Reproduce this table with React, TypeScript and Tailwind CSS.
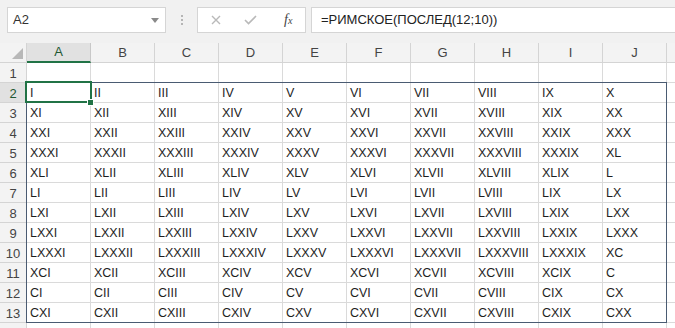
import React from 'react'

// Column letters shown in the header row
const columns = ['A', 'B', 'C', 'D', 'E', 'F', 'G', 'H', 'I', 'J']

// Row numbers visible in the sheet
const rows = Array.from({ length: 13 }, (_, i) => i + 1)

// Convert an integer to a roman numeral
const toRoman = (n: number): string => {
  const table: [number, string][] = [
    [100, 'C'], [90, 'XC'], [50, 'L'], [40, 'XL'],
    [10, 'X'], [9, 'IX'], [5, 'V'], [4, 'IV'], [1, 'I']
  ]
  let out = ''
  let rest = n
  for (const [value, sym] of table) {
    while (rest >= value) {
      out += sym
      rest -= value
    }
  }
  return out
}

// Spilled result of =РИМСКОЕ(ПОСЛЕД(12;10)) starting at A2
const cellValue = (row: number, col: number) => {
  if (row < 2) return ''
  return toRoman((row - 2) * 10 + col + 1)
}

const font = { fontFamily: '"Liberation Sans", Arial, sans-serif' }

const FormulaBar = () => (
  <div className="h-[43px] bg-[#f1f1f1] flex items-start pt-[7px] pl-[7px]">
    {/* Name box */}
    <div className="w-[159px] h-[26px] bg-white border border-[#d5d5d5] flex items-center justify-between pl-[5px] pr-[6px]">
      <span className="text-[13px] text-[#333]">A2</span>
      <svg width="8" height="5" viewBox="0 0 8 5">
        <path d="M0 0 L8 0 L4 5 Z" fill="#8a8a8a" />
      </svg>
    </div>

    {/* Grip dots */}
    <div className="w-[31px] h-[26px] flex flex-col items-center justify-center gap-[2px]">
      <span className="w-[2px] h-[2px] bg-[#b5b5b5]" />
      <span className="w-[2px] h-[2px] bg-[#b5b5b5]" />
      <span className="w-[2px] h-[2px] bg-[#b5b5b5]" />
    </div>

    {/* Cancel / enter / insert function */}
    <div className="w-[109px] h-[26px] bg-white border border-[#d5d5d5] flex items-center">
      <svg className="ml-[13px]" width="10" height="10" viewBox="0 0 10 10">
        <path d="M1 1 L9 9 M9 1 L1 9" stroke="#b9b9b9" strokeWidth="1.4" />
      </svg>
      <svg className="ml-[23px]" width="13" height="10" viewBox="0 0 13 10">
        <path d="M1 5 L4.5 8.5 L12 1" stroke="#b9b9b9" strokeWidth="1.6" fill="none" />
      </svg>
      <span
        className="ml-[27px] text-[14px] italic text-[#444] leading-none"
        style={{ fontFamily: '"Liberation Serif", serif' }}
      >
        f<span className="text-[10px]">x</span>
      </span>
    </div>

    {/* Formula text */}
    <div className="flex-1 ml-[5px] h-[26px] bg-white border border-[#d5d5d5] border-r-0 flex items-center pl-[9px]">
      <span className="text-[13px] text-[#222]">=РИМСКОЕ(ПОСЛЕД(12;10))</span>
    </div>
  </div>
)

const Sheet = () => (
  <div className="relative">
    {/* Header row */}
    <div className="flex h-[20px]">
      <div className="w-[27px] shrink-0 bg-[#f3f3f3] border-r border-b border-[#d4d4d4] relative overflow-hidden">
        <svg className="absolute right-[3px] bottom-[3px]" width="11" height="11" viewBox="0 0 11 11">
          <path d="M11 0 L11 11 L0 11 Z" fill="#b8b8b8" />
        </svg>
      </div>
      {columns.map((c, i) => (
        <div
          key={c}
          className={
            i === 0
              ? 'w-[64px] shrink-0 bg-[#e1e1e1] border-r border-[#c8c8c8] border-b-2 border-b-[#217346] flex items-center justify-center text-[13px] text-[#215732]'
              : 'w-[64px] shrink-0 bg-[#f3f3f3] border-r border-b border-[#d4d4d4] flex items-center justify-center text-[13px] text-[#444]'
          }
        >
          {c}
        </div>
      ))}
      <div className="flex-1 bg-[#f3f3f3] border-b border-[#d4d4d4]" />
    </div>

    {/* Body rows */}
    {[...rows, 14].map((r) => (
      <div key={r} className="flex h-[20px]">
        <div
          className={
            r === 2
              ? 'w-[27px] shrink-0 bg-[#e1e1e1] border-r border-b border-[#d4d4d4] flex items-end justify-center pb-px text-[13px] leading-[15px] text-[#215732]'
              : 'w-[27px] shrink-0 bg-[#f3f3f3] border-r border-b border-[#d4d4d4] flex items-end justify-center pb-px text-[13px] leading-[15px] text-[#444]'
          }
        >
          {r <= 13 ? r : ''}
        </div>
        {columns.map((c, ci) => (
          <div
            key={c}
            className="w-[64px] shrink-0 bg-white border-r border-b border-[#dadada] flex items-end pl-[3px] pb-px text-[12.5px] leading-[15px] text-[#1e1e1e] whitespace-nowrap overflow-hidden"
          >
            {r <= 13 ? cellValue(r, ci) : ''}
          </div>
        ))}
        <div className="flex-1 bg-white border-b border-[#dadada]" />
      </div>
    ))}

    {/* Outline of the spilled range A2:J13 */}
    <div className="absolute left-[26px] top-[39px] w-[641px] h-[241px] border border-[#4a5b72] pointer-events-none" />

    {/* Active cell A2 */}
    <div className="absolute left-[25px] top-[38px] w-[67px] h-[22px] border-2 border-[#217346] pointer-events-none" />
    <div className="absolute left-[87px] top-[56px] w-[7px] h-[7px] bg-[#217346] border border-white" />
  </div>
)

const App = () => {
  return (
    <div className="w-[675px] h-[328px] overflow-hidden bg-white" style={font}>
      <FormulaBar />
      <Sheet />
    </div>
  )
}

export default App
